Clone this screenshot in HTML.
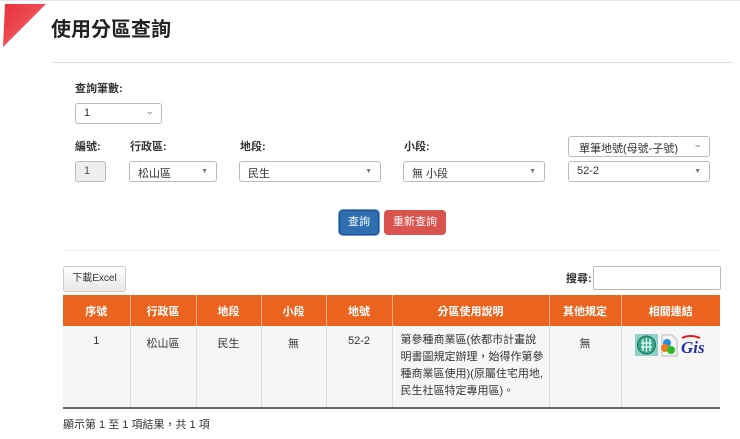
<!DOCTYPE html>
<html><head><meta charset="utf-8"><style>
*{box-sizing:border-box;margin:0;padding:0}
body{width:740px;height:439px;background:#fff;font-family:"Liberation Sans","Noto Sans CJK TC",sans-serif;position:relative;overflow:hidden;color:#333;font-size:11px}
.a{position:absolute}
.lbl{font-weight:bold;font-size:11px;color:#333}
.sel{position:absolute;height:21px;border:1px solid #bbb;border-radius:3px;background:#fff;font-size:11px;padding:3px 0 0 8px;color:#333}
.sel .ar{position:absolute;right:8px;top:6px;font-size:7px;color:#777}
.sel .chev{position:absolute;right:7px;top:2px;font-size:9px;color:#888;transform:scaleX(1.4)}
table{position:absolute;left:63px;top:295px;width:657px;border-collapse:collapse;font-size:11px;table-layout:fixed}
th{background:#ea6420;color:#fff;height:31px;border-left:1px solid #f4b08a;font-weight:bold}
th:first-child{border-left:none}
td{background:#f6f6f6;height:82px;vertical-align:top;text-align:center;padding-top:9px;border-left:1px solid #ddd;border-bottom:2px solid #666;color:#333}
td:first-child{border-left:none}
</style></head><body>
<div class="a" style="left:0;top:0;width:740px;height:1px;background:#e5e5e5"></div>
<svg class="a" style="left:0;top:0" width="50" height="50"><defs><linearGradient id="g" x1="0" y1="0" x2="1" y2="1"><stop offset="0" stop-color="#e8303a"/><stop offset="1" stop-color="#f26a6e"/></linearGradient></defs><polygon points="5,4 46,4 3,47" fill="url(#g)"/></svg>
<div class="a" style="left:51px;top:13px;font-size:20px;font-weight:bold;color:#222">使用分區查詢</div>
<div class="a" style="left:52px;top:62px;width:681px;height:1px;background:#ddd"></div>

<div class="a lbl" style="left:75px;top:80px">查詢筆數:</div>
<div class="sel" style="left:75px;top:103px;width:87px">1<span class="chev">⌄</span></div>

<div class="a lbl" style="left:75px;top:138px">編號:</div>
<div class="a lbl" style="left:130px;top:138px">行政區:</div>
<div class="a lbl" style="left:240px;top:138px">地段:</div>
<div class="a lbl" style="left:404px;top:138px">小段:</div>
<div class="sel" style="left:75px;top:161px;width:31px;background:#eee;color:#555">1</div>
<div class="sel" style="left:129px;top:161px;width:88px">松山區<span class="ar">▼</span></div>
<div class="sel" style="left:239px;top:161px;width:142px">民生<span class="ar">▼</span></div>
<div class="sel" style="left:403px;top:161px;width:142px">無 小段<span class="ar">▼</span></div>
<div class="sel" style="left:568px;top:136px;width:142px;padding-left:10px">單筆地號(母號-子號)<span class="chev">⌄</span></div>
<div class="sel" style="left:568px;top:161px;width:142px">52-2<span class="ar">▼</span></div>

<div class="a" style="left:339px;top:210px;width:40px;height:25px;background:#2f6eb0;border:1px solid #1c4f8a;border-radius:4px;color:#fff;font-size:11px;text-align:center;line-height:23px;box-shadow:0 0 0 1px #6fa0d8">查詢</div>
<div class="a" style="left:384px;top:210px;width:62px;height:25px;background:#d9534f;border-radius:4px;color:#fff;font-size:11px;text-align:center;line-height:25px">重新查詢</div>
<div class="a" style="left:63px;top:250px;width:657px;height:1px;background:#eee"></div>

<div class="a" style="left:63px;top:266px;width:63px;height:26px;border:1px solid #ccc;border-radius:3px;background:linear-gradient(#fff,#e8e8e8);font-size:10px;text-align:center;line-height:24px;color:#333">下載Excel</div>
<div class="a" style="left:566px;top:270px;font-size:11px;font-weight:bold">搜尋:</div>
<div class="a" style="left:593px;top:266px;width:128px;height:24px;border:1px solid #bbb;border-radius:2px"></div>

<table><tr><th style="width:67px">序號</th><th style="width:66px">行政區</th><th style="width:65px">地段</th><th style="width:65px">小段</th><th style="width:66px">地號</th><th style="width:157px">分區使用說明</th><th style="width:72px">其他規定</th><th>相關連結</th></tr>
<tr><td>1</td><td>松山區</td><td>民生</td><td>無</td><td>52-2</td><td style="text-align:left;padding:6px 0 0 8px;line-height:17px;white-space:nowrap">第參種商業區(依都市計畫說<br>明書圖規定辦理，始得作第參<br>種商業區使用)(原屬住宅用地,<br>民生社區特定專用區)。</td><td>無</td><td style="padding-top:7px"><svg width="74" height="24"><rect x="1" y="1" width="23" height="22" fill="#8fd0c8"/><circle cx="12.5" cy="12" r="9" fill="#3aa88a" stroke="#1d6d58"/><path d="M9 6v12M12.5 5v14M16 6v12M7 10h11M7 14h11" stroke="#e8fff8" stroke-width="1.3" fill="none"/><path d="M28 2h10l5 5v16H28z" fill="#f4f4f4" stroke="#bbb"/><circle cx="33" cy="10" r="4" fill="#2a8be0"/><circle cx="31" cy="15" r="4" fill="#f07a1a"/><circle cx="37" cy="17" r="4" fill="#2cb82c"/><text x="47" y="20" font-family="Liberation Serif" font-style="italic" font-weight="bold" font-size="17" fill="#2530a8">Gis</text><path d="M48 5q8-4 18 0" stroke="#e02020" stroke-width="2" fill="none"/></svg></td></tr></table>

<div class="a" style="left:63px;top:416px;font-size:11px;color:#333">顯示第 1 至 1 項結果，共 1 項</div>
</body></html>
